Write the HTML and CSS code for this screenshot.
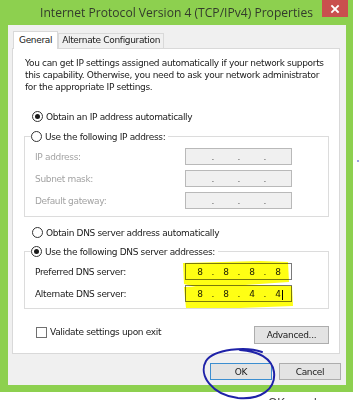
FILE: index.html
```html
<!DOCTYPE html>
<html>
<head>
<meta charset="utf-8">
<link rel="stylesheet" href="styles.css">
</head>
<body>
<div class="screen">
  <div class="window">
    <div class="titlebar">
      <span></span>
      <span class="title">Internet Protocol Version 4 (TCP/IPv4) Properties</span>
      <span class="close"><svg width="10" height="10" viewBox="0 0 10 10"><path d="M2 2 L8 8 M8 2 L2 8" stroke="#fff" stroke-width="1.8" stroke-linecap="square"/></svg></span>
    </div>
    <div class="dialog">
      <div class="tabs">
        <div class="tab active">General</div>
        <div class="tab">Alternate Configuration</div>
      </div>
      <div class="panel">
        <p class="intro">You can get IP settings assigned automatically if your network supports<br>this capability. Otherwise, you need to ask your network administrator<br>for the appropriate IP settings.</p>
        <div class="radio-row first"><span class="radio checked"></span>Obtain an IP address automatically</div>
        <div class="group">
          <div class="legend"><span class="radio"></span>Use the following IP address:</div>
          <div class="field disabled"><span class="label">IP address:</span><div class="ipbox"><b></b><i>.</i><b></b><i>.</i><b></b><i>.</i><b></b></div></div>
          <div class="field disabled"><span class="label">Subnet mask:</span><div class="ipbox"><b></b><i>.</i><b></b><i>.</i><b></b><i>.</i><b></b></div></div>
          <div class="field disabled"><span class="label">Default gateway:</span><div class="ipbox"><b></b><i>.</i><b></b><i>.</i><b></b><i>.</i><b></b></div></div>
        </div>
        <div class="radio-row dns"><span class="radio"></span>Obtain DNS server address automatically</div>
        <div class="group group-dns">
          <div class="legend"><span class="radio checked"></span>Use the following DNS server addresses:</div>
          <div class="field"><span class="label">Preferred DNS server:</span><div class="ipbox"><b>8</b><i>.</i><b>8</b><i>.</i><b>8</b><i>.</i><b>8</b></div></div>
          <div class="field"><span class="label">Alternate DNS server:</span><div class="ipbox"><b>8</b><i>.</i><b>8</b><i>.</i><b>4</b><i>.</i><b class="caret">4</b></div></div>
        </div>
        <div class="bottom-row">
          <div class="check-row"><span class="checkbox"></span>Validate settings upon exit</div>
          <div class="btn advanced">Advanced...</div>
        </div>
      </div>
      <div class="buttons">
        <div class="btn ok">OK</div>
        <div class="btn">Cancel</div>
      </div>
    </div>
  </div>
  <div class="below">OK we also can</div>
  <svg class="marker" width="361" height="400" viewBox="0 0 361 400">
    <path d="M183 263 L260 261 L288 262 L289 282 L245 285 L200 288 L184 284 Z" fill="#ffff14"/>
    <path d="M184 287 L240 285 L292 286 L293 306 L240 308 L186 308 Z" fill="#ffff14"/>
  </svg>
  <svg class="pen" width="361" height="400" viewBox="0 0 361 400">
    <path d="M262 352 C246 346 214 349 206 361 C198 375 212 395 238 398 C261 400 276 389 274 372 C272 358 258 351 240 350" stroke="#1f22a8" stroke-width="2" fill="none" stroke-linecap="round"/>
    <circle cx="358" cy="161" r="0.8" fill="#3030c0"/>
  </svg>
</div>
</body>
</html>
```
FILE: styles.css
```css
* { box-sizing: border-box; }
html, body { margin: 0; padding: 0; }
body {
  width: 361px;
  height: 400px;
  overflow: hidden;
  background: #fff;
  font-family: "DejaVu Sans", "Liberation Sans", sans-serif;
  font-size: 9px;
  letter-spacing: -0.33px;
  color: #1a1a1a;
}
.screen { position: relative; width: 361px; height: 400px; }
.window {
  width: 353px;
  background: #8dd04f;
  padding-bottom: 7px;
}
.titlebar {
  height: 25px;
  display: grid;
  grid-template-columns: 1fr auto 1fr;
  align-items: start;
}
.title {
  font-family: "Open Sans", sans-serif;
  font-size: 12.1px;
  letter-spacing: 0;
  line-height: 26px;
  color: #333b2c;
}
.close {
  justify-self: end;
  margin-right: 5px;
  width: 26px;
  height: 17px;
  background: #c9504e;
  display: flex;
  align-items: center;
  justify-content: center;
}
.close svg { display: block; }
.dialog {
  margin: 0 7px 0 8px;
  height: 360px;
  background: #f0f0f0;
  padding: 6px 6px 0 4px;
}
.tabs {
  display: flex;
  align-items: flex-end;
  height: 17px;
  padding-left: 1px;
}
.tab {
  height: 15px;
  border: 1px solid #d9d9d9;
  border-bottom: none;
  background: #f0f0f0;
  padding: 0 3px;
  line-height: 13px;
  white-space: nowrap;
}
.tab.active {
  height: 18px;
  margin-bottom: -1px;
  background: #fff;
  padding: 0 5px;
  line-height: 16px;
  position: relative;
  z-index: 1;
}
.panel {
  height: 306px;
  border: 1px solid #d9d9d9;
  background: #fff;
}
.intro {
  margin: 0;
  padding: 8px 0 0 12px;
  line-height: 12px;
  white-space: nowrap;
}
.radio-row, .legend, .check-row {
  display: flex;
  align-items: center;
  height: 13px;
  white-space: nowrap;
}
.radio-row { margin-left: 19px; }
.radio-row.first { margin-top: 17px; }
.radio-row.dns { margin-top: 9px; }
.radio {
  width: 11px;
  height: 11px;
  border: 1px solid #333;
  border-radius: 50%;
  background: #fff;
  margin-right: 3px;
  display: flex;
  align-items: center;
  justify-content: center;
  flex: none;
}
.radio.checked::after {
  content: "";
  width: 5px;
  height: 5px;
  border-radius: 50%;
  background: #1a1a1a;
}
.group {
  border: 1px solid #dcdcdc;
  margin: 13px 10px 0 11px;
  padding: 0 0 7px 10px;
}
.group-dns { margin-top: 12px; padding-bottom: 6px; }
.legend {
  width: max-content;
  margin: -7px 0 0 -4px;
  background: #fff;
  padding-right: 3px;
}
.field {
  display: grid;
  grid-template-columns: 150px 107px;
  align-items: center;
  height: 17px;
  margin-top: 5px;
}
.field.disabled .label { color: #a3a3a3; }
.ipbox {
  height: 17px;
  border: 1px solid #7a7a7a;
  background: #fff;
  display: flex;
  align-items: center;
  padding-left: 3px;
  font-size: 9px;
  letter-spacing: 0;
}
.field.disabled .ipbox { border-color: #b9b9b9; background: #f0f0f0; color: #555; }
.ipbox b { width: 22px; text-align: center; font-weight: normal; }
.ipbox i { width: 4px; text-align: center; font-style: normal; }
.ipbox b.caret { position: relative; }
.ipbox b.caret::after {
  content: "";
  position: absolute;
  right: 6px;
  top: 1px;
  width: 1px;
  height: 10px;
  background: #000;
}
.bottom-row {
  display: flex;
  justify-content: space-between;
  align-items: flex-start;
  margin: 17px 10px 0 23px;
}
.check-row { height: 12px; }
.checkbox {
  width: 11px;
  height: 11px;
  border: 1px solid #707070;
  background: #fff;
  margin-right: 3px;
}
.btn {
  height: 18px;
  border: 1px solid #adadad;
  background: #e3e3e3;
  display: flex;
  align-items: center;
  justify-content: center;
  white-space: nowrap;
}
.advanced { width: 75px; }
.buttons {
  display: flex;
  justify-content: flex-end;
  gap: 7px;
  margin: 9px -1px 0 0;
}
.buttons .btn { width: 62px; height: 17px; }
.btn.ok { border-color: #3c8ed0; }
.below {
  margin: 4px 0 0 268px;
  font-family: "Liberation Sans", sans-serif;
  font-size: 12px;
  letter-spacing: 0;
  color: #444;
  white-space: nowrap;
}
.marker {
  position: absolute;
  left: 0;
  top: 0;
  mix-blend-mode: multiply;
  pointer-events: none;
}
.pen {
  position: absolute;
  left: 0;
  top: 0;
  pointer-events: none;
}
```
